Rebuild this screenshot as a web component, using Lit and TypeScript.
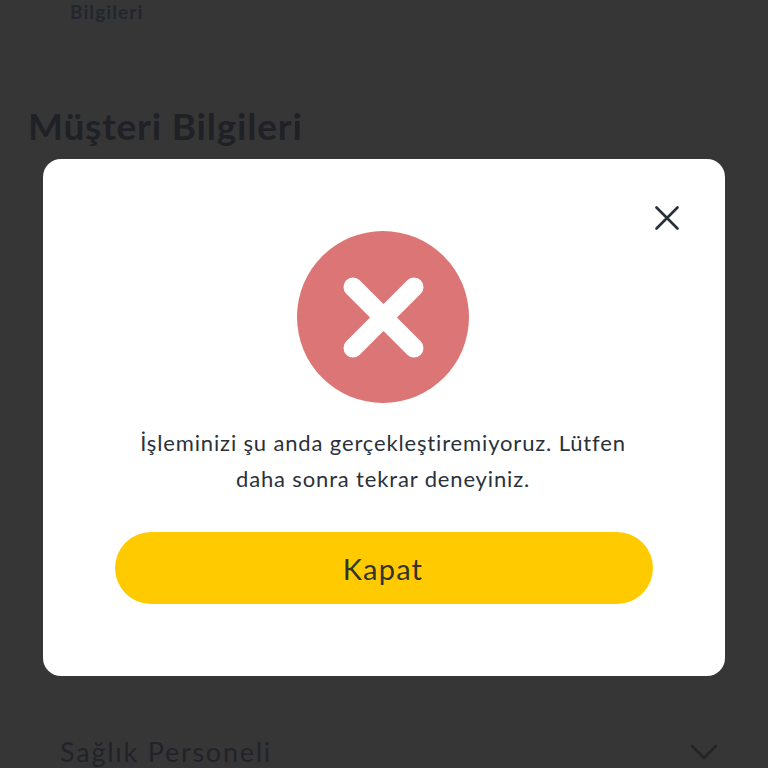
import { LitElement, html, css } from "lit";
import { customElement } from "lit/decorators.js";

@customElement("app-root")
export class AppRoot extends LitElement {
  static styles = css`
    :host {
      display: block;
      width: 768px;
      height: 768px;
      overflow: hidden;
      position: relative;
      background: #363636;
      font-family: "Lato", "Liberation Sans", sans-serif;
    }
    .page {
      display: flex;
      flex-direction: column;
      height: 768px;
      box-sizing: border-box;
      color: #1f2126;
    }
    .crumb {
      margin: 0 0 0 70px;
      height: 24px;
      line-height: 24px;
      font-size: 19px;
      font-weight: 700;
      letter-spacing: 1.1px;
      color: #22262e;
    }
    .title {
      margin: 80px 0 0 28px;
      height: 44px;
      line-height: 44px;
      font-size: 37px;
      font-weight: 700;
      letter-spacing: 0.8px;
    }
    .card {
      flex: none;
      margin: 563px 28px 0 28px;
      padding: 25px 22px 0 32px;
      display: flex;
      justify-content: space-between;
      align-items: center;
    }
    .card span {
      font-size: 27px;
      line-height: 32px;
      letter-spacing: 1.75px;
      color: #212328;
    }
    .chev {
      width: 28px;
      height: 16px;
      display: block;
    }
    .overlay {
      position: absolute;
      left: 43px;
      top: 159px;
      width: 682px;
      height: 517px;
      box-sizing: border-box;
      background: #fff;
      border-radius: 18px;
      display: flex;
      flex-direction: column;
      align-items: center;
      padding: 72px 72px 0;
    }
    .close {
      position: absolute;
      top: 47px;
      right: 46px;
      width: 24px;
      height: 24px;
      display: block;
    }
    .badge {
      width: 172px;
      height: 172px;
      display: block;
      flex: none;
      margin-right: 2px;
    }
    .msg {
      margin: 22px 0 0;
      width: 100%;
      box-sizing: border-box;
      padding-right: 2px;
      text-align: center;
      font-size: 22px;
      line-height: 36px;
      letter-spacing: 0.85px;
      color: #2b313a;
    }
    .btn {
      margin-top: 35px;
      width: 538px;
      height: 72px;
      flex: none;
      border: 0;
      padding: 0 2px 0 0;
      border-radius: 36px;
      background: #ffcb00;
      color: #33342c;
      font-family: inherit;
      font-size: 29px;
      letter-spacing: 1.2px;
    }
  `;

  render() {
    return html`
      <div class="page">
        <div class="crumb">Bilgileri</div>
        <h1 class="title">Müşteri Bilgileri</h1>
        <div class="card">
          <span>Sağlık Personeli</span>
          <svg class="chev" viewBox="0 0 28 16" fill="none" stroke="#222428" stroke-width="2.5" stroke-linecap="round">
            <path d="M2 2 L14 14 L26 2"></path>
          </svg>
        </div>
      </div>
      <div class="overlay">
        <svg class="close" viewBox="0 0 24 24" fill="none" stroke="#27303a" stroke-width="2.6" stroke-linecap="round">
          <path d="M1.5 1.5 L22.5 22.5 M22.5 1.5 L1.5 22.5"></path>
        </svg>
        <svg class="badge" viewBox="0 0 172 172">
          <circle cx="86" cy="86" r="86" fill="#dc7676"></circle>
          <path d="M56 56 L117 117 M117 56 L56 117" stroke="#fff" stroke-width="19" stroke-linecap="round" fill="none"></path>
        </svg>
        <p class="msg">İşleminizi şu anda gerçekleştiremiyoruz. Lütfen daha sonra tekrar deneyiniz.</p>
        <button class="btn">Kapat</button>
      </div>
    `;
  }
}
